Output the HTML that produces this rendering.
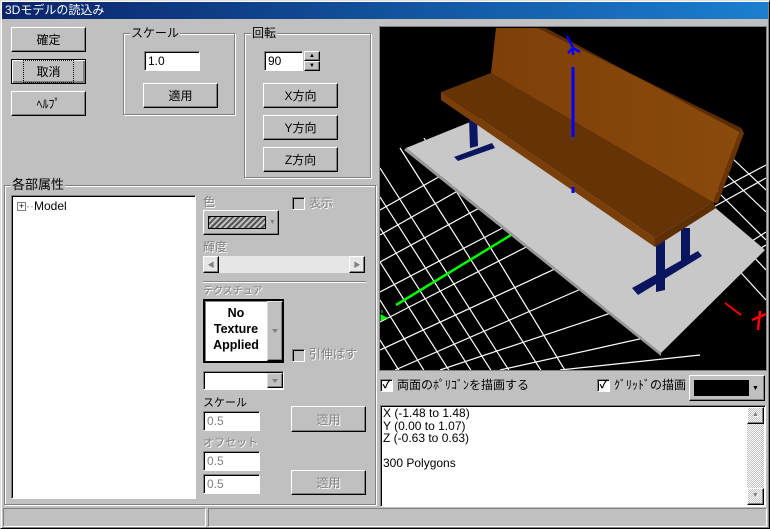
<!DOCTYPE html>
<html><head><meta charset="utf-8"><style>
*{box-sizing:border-box;margin:0;padding:0}
body{width:770px;height:529px;background:#c0c0c0;font-family:"Liberation Sans","Noto Sans CJK JP",sans-serif;font-size:12px;color:#000;position:relative;overflow:hidden}
.a{position:absolute}
.win{left:0;top:0;width:770px;height:529px;border:1px solid;border-color:#dfdfdf #000 #000 #dfdfdf;box-shadow:inset 1px 1px #fff,inset -1px -1px #808080}
.title{left:2px;top:2px;width:766px;height:17px;background:linear-gradient(90deg,#0a246a,#1b7fd0);color:#fff;font-size:12px;line-height:17px;padding-left:3px}
.btn{position:absolute;border:1px solid;border-color:#fff #000 #000 #fff;box-shadow:inset -1px -1px #808080;text-align:center;font-size:12px;display:flex;align-items:center;justify-content:center}
.dis{color:#808080;text-shadow:1px 1px #fff}
.grp{position:absolute;border:1px solid #808080;box-shadow:1px 1px #fff,inset 1px 1px #fff}
.grp>span{position:absolute;top:-8px;left:6px;background:#c0c0c0;padding:0 1px;font-size:12px;line-height:14px}
.edit{position:absolute;background:#fff;border:1px solid;border-color:#808080 #fff #fff #808080;box-shadow:inset 1px 1px #000;padding:2px 0 0 3px;font-size:12px;line-height:14px}
.edit.d{color:#808080;background:#fff}
.cb{position:absolute;width:13px;height:13px;background:#fff;border:1px solid;border-color:#808080 #fff #fff #808080;box-shadow:inset 1px 1px #000}
.cb.d{background:#c0c0c0}
.lbl{position:absolute;font-size:12px;line-height:14px}
.dd{position:absolute;width:16px;border:1px solid;border-color:#dfdfdf #000 #000 #dfdfdf;background:#c0c0c0;box-shadow:inset -1px -1px #808080}
.dd:after{content:"";position:absolute;left:4px;top:50%;margin-top:-2px;border:3px solid transparent;border-top:4px solid #808080;border-bottom:0}
</style></head><body>
<div class="a win"></div>
<div class="a title">3Dモデルの読込み</div>

<div class="btn" style="left:11px;top:27px;width:75px;height:25px">確定</div>
<div class="btn" style="left:11px;top:59px;width:75px;height:25px;border:1px solid #000;box-shadow:inset 1px 1px #fff,inset -2px -2px #808080"><span style="border:1px dotted #000;padding:2px 12px">取消</span></div>
<div class="btn" style="left:11px;top:91px;width:75px;height:25px">ﾍﾙﾌﾟ</div>

<div class="grp" style="left:123px;top:33px;width:112px;height:82px"><span>スケール</span></div>
<div class="edit" style="left:144px;top:51px;width:56px;height:20px">1.0</div>
<div class="btn" style="left:143px;top:83px;width:75px;height:25px">適用</div>

<div class="grp" style="left:244px;top:33px;width:127px;height:145px"><span>回転</span></div>
<div class="edit" style="left:264px;top:51px;width:39px;height:20px">90</div>
<div class="btn" style="left:304px;top:51px;width:16px;height:10px;font-size:6px">▲</div>
<div class="btn" style="left:304px;top:61px;width:16px;height:10px;font-size:6px">▼</div>
<div class="btn" style="left:263px;top:83px;width:75px;height:25px">X方向</div>
<div class="btn" style="left:263px;top:115px;width:75px;height:25px">Y方向</div>
<div class="btn" style="left:263px;top:147px;width:75px;height:25px">Z方向</div>

<div class="grp" style="left:4px;top:185px;width:372px;height:320px"><span style="font-size:13px">各部属性</span></div>
<div class="edit" style="left:11px;top:195px;width:185px;height:304px;padding:3px 0 0 5px"><span style="display:inline-block;width:9px;height:9px;border:1px solid #808080;font-size:9px;line-height:7px;text-align:center;vertical-align:middle">+</span><span style="color:#808080">··</span>Model</div>

<div class="lbl dis" style="left:203px;top:195px">色</div>
<div class="btn" style="left:203px;top:210px;width:76px;height:25px;justify-content:flex-start;padding-left:4px"><span style="display:block;width:58px;height:13px;border:1px solid #000;background:repeating-linear-gradient(135deg,#555 0 2px,#c0c0c0 2px 4px)"></span><span style="color:#808080;font-size:7px;margin-left:3px">▼</span></div>
<div class="cb d" style="left:292px;top:197px"></div>
<div class="lbl dis" style="left:309px;top:196px">表示</div>
<div class="lbl dis" style="left:203px;top:240px">輝度</div>
<div class="a" style="left:203px;top:256px;width:162px;height:17px;background:#e6e6e6">
 <div class="btn" style="left:0;top:0;width:16px;height:17px;font-size:7px;color:#808080">◀</div>
 <div class="btn" style="left:146px;top:0;width:16px;height:17px;font-size:7px;color:#808080">▶</div>
</div>
<div class="a" style="left:203px;top:281px;width:163px;height:2px;border-top:1px solid #808080;border-bottom:1px solid #fff"></div>
<div class="lbl dis" style="left:203px;top:285px;font-size:10px">テクスチュア</div>
<div class="a" style="left:203px;top:299px;width:81px;height:64px;background:#fff;border:2px solid #000;box-shadow:inset 1px 1px #808080">
 <div class="a" style="left:0;top:4px;width:62px;text-align:center;font-weight:bold;font-size:12.5px;line-height:16px">No<br>Texture<br>Applied</div>
 <div class="dd" style="left:62px;top:0;height:60px"></div>
</div>
<div class="cb d" style="left:292px;top:349px"></div>
<div class="lbl dis" style="left:309px;top:347px">引伸ばす</div>
<div class="edit" style="left:203px;top:371px;width:81px;height:19px;padding:0"><div class="dd" style="left:63px;top:1px;height:15px"></div></div>
<div class="lbl" style="left:203px;top:396px;font-size:11px">スケール</div>
<div class="edit d" style="left:203px;top:411px;width:57px;height:20px">0.5</div>
<div class="btn dis" style="left:291px;top:406px;width:75px;height:26px">適用</div>
<div class="lbl dis" style="left:203px;top:436px;font-size:11px">オフセット</div>
<div class="edit d" style="left:203px;top:451px;width:57px;height:20px">0.5</div>
<div class="edit d" style="left:203px;top:474px;width:57px;height:20px">0.5</div>
<div class="btn dis" style="left:291px;top:470px;width:75px;height:25px">適用</div>

<svg class="a" style="left:379px;top:26px" width="388" height="345" viewBox="379 26 388 345">
<defs><clipPath id="c"><rect x="380" y="27" width="386" height="343"/></clipPath>
<linearGradient id="bk" x1="0" y1="0" x2="1" y2="0"><stop offset="0" stop-color="#7e4008"/><stop offset="1" stop-color="#8a4a0c"/></linearGradient></defs>
<rect x="379" y="26" width="388" height="345" fill="#808080"/>
<rect x="380" y="27" width="386" height="343" fill="#000"/>
<g clip-path="url(#c)" stroke="#fff" stroke-width="1.2" fill="none">
<path d="M380 168L510 372M380 197L492 372M380 228L472 372M380 262L450 372M380 300L425 372M380 340L400 372M400 148L542 372M424 138L566 372M700 228L766 300M708 208L766 270M716 190L766 240M724 172L766 212M732 158L766 190"/>
<path d="M380 235L530 150M380 262L540 175M380 292L560 198M380 322L575 222M380 350L600 248M395 370L620 272M440 370L650 300M500 370L680 330M560 370L700 355M380 210L460 165M640 320L766 245M660 300L766 232M690 220L766 178M700 200L766 165"/>
</g>
<polygon clip-path="url(#c)" points="406,148 480,118 612,120 765,250 661,353" fill="#c8c8c8"/>
<polygon points="406,148 661,353 661,356 404,150" fill="#9a9a9a"/>
<line x1="511" y1="235" x2="396" y2="305" stroke="#00ff00" stroke-width="2.5"/>
<path d="M382 310L382 313M381 315L387 318L381 320Z" stroke="#00ff00" fill="#00ff00"/>
<line x1="725" y1="303" x2="741" y2="315" stroke="#ff0000" stroke-width="2"/>
<path d="M752 320L766 314M760 311L758 330" stroke="#ff0000" stroke-width="2.5"/>
<g fill="#0a1560">
<polygon points="469,118 477,118 478,146 470,148"/>
<polygon points="454,157 492,143 495,148 458,161"/>
<polygon points="656,240 665,240 665,290 656,292"/>
<polygon points="681,228 690,228 690,262 681,265"/>
<polygon points="632,288 698,251 702,256 638,295"/>
</g>
<polygon points="496,28 538,28 741,128 713,203 491,73" fill="url(#bk)"/>
<polygon points="538,28 546,28 743,134 741,128" fill="#5a2c04"/>
<polygon points="741,128 744,133 718,203 713,203" fill="#6a3405"/>
<polygon points="441,92 491,73 713,202 655,238" fill="#653305"/>
<polygon points="441,92 655,238 655,247 441,100" fill="#7a3e08"/>
<polygon points="655,238 713,202 716,208 655,247" fill="#5e2f05"/>
<line x1="573" y1="67" x2="573" y2="137" stroke="#0000ff" stroke-width="3"/>
<line x1="573" y1="187" x2="573" y2="193" stroke="#0000ff" stroke-width="3"/>
<path d="M567 36L573 48L568 53M573 48L580 52M573 48L573 55" stroke="#0000ff" stroke-width="2.5" fill="none"/>
</svg>

<div class="cb" style="left:380px;top:379px;font-size:11px;line-height:10px;text-align:center;font-weight:bold">✓</div>
<div class="lbl" style="left:397px;top:378px">両面のﾎﾟﾘｺﾞﾝを描画する</div>
<div class="cb" style="left:597px;top:379px;font-size:11px;line-height:10px;text-align:center;font-weight:bold">✓</div>
<div class="lbl" style="left:614px;top:378px">ｸﾞﾘｯﾄﾞの描画</div>
<div class="btn" style="left:689px;top:375px;width:76px;height:26px;justify-content:flex-start;padding-left:4px"><span style="display:block;width:55px;height:16px;background:#000"></span><span style="font-size:7px;margin-left:3px">▼</span></div>

<div class="edit" style="left:380px;top:405px;width:386px;height:102px;padding:1px 0 0 2px;line-height:12.5px;font-size:12px">X (-1.48 to 1.48)<br>Y (0.00 to 1.07)<br>Z (-0.63 to 0.63)<br><br>300 Polygons
 <div class="a" style="left:366px;top:1px;width:17px;height:98px;background:repeating-conic-gradient(#c0c0c0 0 25%,#fff 0 50%) 0 0/2px 2px">
  <div class="btn dis" style="left:0;top:0;width:17px;height:17px;font-size:7px">▲</div>
  <div class="btn dis" style="left:0;top:81px;width:17px;height:17px;font-size:7px">▼</div>
 </div>
</div>

<div class="a" style="left:3px;top:508px;width:203px;height:19px;border:1px solid;border-color:#808080 #fff #fff #808080"></div>
<div class="a" style="left:208px;top:508px;width:559px;height:19px;border:1px solid;border-color:#808080 #fff #fff #808080"></div>
</body></html>
